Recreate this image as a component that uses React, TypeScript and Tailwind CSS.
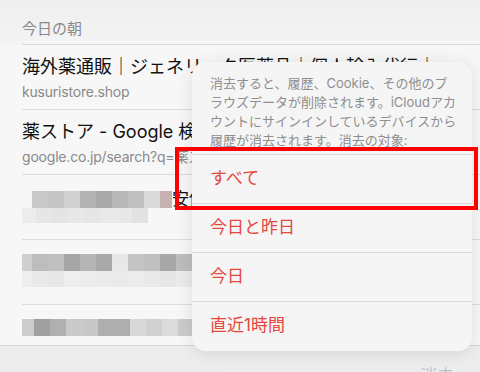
const font = "font-['Inter','Noto_Sans_CJK_JP',sans-serif]";

function Cells({ colors, h = 'h-[17px]' }: { colors: string[]; h?: string }) {
  return (
    <div className="flex">
      {colors.map((c, i) => (
        <div key={i} className={`w-[16px] ${h}`} style={{ backgroundColor: c }} />
      ))}
    </div>
  );
}

const options = ['すべて', '今日と昨日', '今日', '直近1時間'];

export default function App() {
  return (
    <div className={`relative w-[480px] h-[372px] overflow-hidden bg-[#f7f7f7] flex flex-col ${font}`}>
      {/* header */}
      <div className="h-[45px] shrink-0 bg-gradient-to-b from-[#eeeeee] to-[#f4f4f4]">
        <div className="ml-[22px] h-[45px] border-b border-[#d9d9d9] flex items-end pb-[5px]">
          <span className="text-[15px] leading-[20px] text-[#8a8a8a]">今日の朝</span>
        </div>
      </div>

      {/* rows */}
      <div className="ml-[22px] h-[65px] shrink-0 border-b border-[#dcdcdc] pt-[10px] overflow-hidden">
        <div className="text-[18px] leading-[24px] text-[#111] whitespace-nowrap">
          海外薬通販｜ジェネリック医薬品｜個人輸入代行｜
        </div>
        <div className="text-[14px] leading-[19px] mt-[3px] text-[#8a8a8a] whitespace-nowrap tracking-[-0.2px]">
          kusuristore.shop
        </div>
      </div>
      <div className="ml-[22px] h-[65px] shrink-0 border-b border-[#dcdcdc] pt-[10px] overflow-hidden">
        <div className="text-[18px] leading-[24px] text-[#111] whitespace-nowrap">薬ストア - Google 検索</div>
        <div className="text-[14px] leading-[19px] mt-[3px] text-[#8a8a8a] whitespace-nowrap tracking-[-0.2px]">
          google.co.jp/search?q=薬ストア
        </div>
      </div>
      <div className="ml-[22px] h-[65px] shrink-0 border-b border-[#dcdcdc] pt-[16px] overflow-hidden">
        <div className="flex items-center ml-[10px]">
          <Cells colors={['#cacaca', '#c6c6c6', '#d0d0d0', '#b3b3b3', '#aaaaaa', '#b9b9b9', '#bfbfbf', '#dadada']} />
          <div className="w-[12px] h-[17px] bg-[#c9b2b2]" />
          <span className="text-[17px] leading-[17px] text-[#111] whitespace-nowrap">安価</span>
        </div>
        <div className="-ml-[2px]">
          <Cells
            h="h-[15px]"
            colors={['#ececec', '#e6e6e6', '#e4e4e4', '#e8e8e8', '#e6e6e6', '#e9e9e9', '#e8e8e8', '#e2e2e2']}
          />
        </div>
      </div>
      <div className="ml-[22px] h-[65px] shrink-0 border-b border-[#dcdcdc] pt-[14px] overflow-hidden">
        <div className="-ml-[6px]">
          <Cells
            colors={['#cfcfcf', '#bdbdbd', '#c0c0c0', '#a5a5a5', '#b5b5b5', '#a9a9a9', '#e8e8e8', '#c4c4c4', '#c0c0c0', '#a8a8a8', '#bdbdbd']}
          />
          <Cells
            h="h-[16px]"
            colors={['#eeeeee', '#e9e9e9', '#e8e8e8', '#eeeeee', '#ececec', '#ebebeb', '#eaeaea', '#ececec', '#e9e9e9', '#e6e6e6', '#ebebeb']}
          />
        </div>
      </div>
      <div className="ml-[22px] flex-1 pt-[14px] overflow-hidden">
        <div className="-ml-[4px]">
          <Cells
            colors={['#cccccc', '#a0a0a0', '#b0b0b0', '#cacaca', '#c8c8c8', '#aeaeae', '#aeaeae', '#d8d8d8', '#d0d0d0', '#dcdcdc', '#cbcbcb']}
          />
        </div>
      </div>

      {/* bottom toolbar */}
      <div className="h-[27px] shrink-0 bg-[#ededed] border-t border-[#d6d6d6] overflow-hidden flex justify-end pr-[26px] pt-[20px]">
        <span className="text-[17px] leading-[20px] text-[#b4c4d4]">消去</span>
      </div>

      {/* popover */}
      <div className="absolute left-[192px] top-[62px] w-[280px] h-[289px] rounded-[14px] bg-[#f5f5f5] shadow-[0_2px_18px_rgba(0,0,0,0.10)] overflow-hidden flex flex-col">
        <div className="px-[18px] pt-[12px] pb-[4px] text-[13px] leading-[19px] text-[#8e8e8e] whitespace-nowrap">
          消去すると、履歴、Cookie、その他のブ
          <br />
          ラウズデータが削除されます。iCloudアカ
          <br />
          ウントにサインインしているデバイスから
          <br />
          履歴が消去されます。消去の対象:
        </div>
        {options.map((o) => (
          <div key={o} className="h-[49px] shrink-0 border-t border-[#dadada] flex items-center px-[18px]">
            <span className="text-[17px] text-[#e5463c]">{o}</span>
          </div>
        ))}
      </div>

      {/* highlight box */}
      <div className="absolute left-[175px] top-[147px] w-[303px] h-[63px] border-4 border-[#ff0000]" />
    </div>
  );
}
